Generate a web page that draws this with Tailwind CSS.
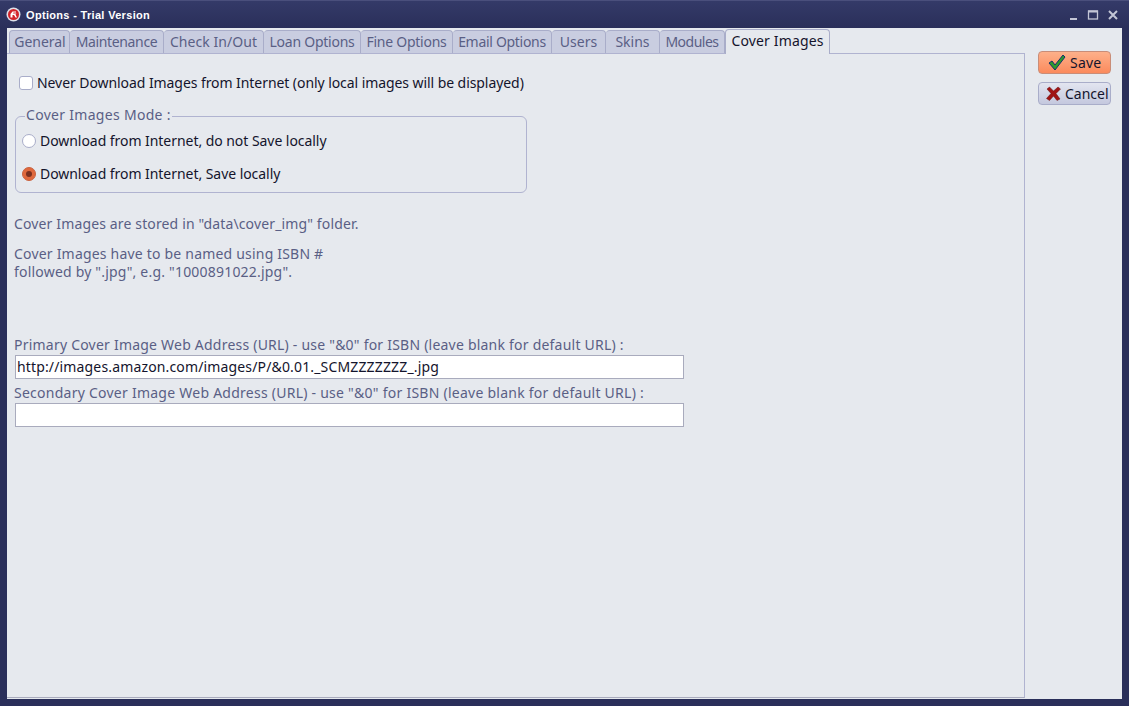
<!DOCTYPE html>
<html lang="en">
<head>
<meta charset="UTF-8" />
<title>Options - Trial Version</title>
<script src="https://cdn.jsdelivr.net/npm/@tailwindcss/browser@4"></script>
</head>
<body class="w-[1129px] h-[706px] overflow-hidden bg-[#2a2f5a] font-['Noto_Sans','DejaVu_Sans',sans-serif] text-[14px] leading-[18px]">

  <!-- title bar -->
  <div class="h-[28px] flex items-center pl-[6px] pr-[9px] bg-gradient-to-b from-[#343a68] to-[#2a2f5a] border-t border-[#4a4f7c]">
    <svg width="15" height="15" viewBox="0 0 15 15" class="shrink-0">
      <circle cx="7.5" cy="7.5" r="7" fill="#dfe1ea"/>
      <circle cx="7.5" cy="7.5" r="5.5" fill="#d3232a"/>
      <path d="M10 4.5 H6.5 L4.5 7 V10.5 H6.5 V8 H8 L9.5 10.5 H11 L9.5 7.5 L10.5 6.5 H7 L7.5 5.5 H10 Z" fill="#fff"/>
    </svg>
    <span class="ml-[5px] text-[11px] font-bold text-white font-['Liberation_Sans',sans-serif] tracking-[0.32px]">Options - Trial Version</span>
    <div class="ml-auto flex items-center gap-[8px] pr-[1px]">
      <svg width="10" height="12" viewBox="0 0 10 12"><rect x="1" y="9" width="7" height="2" fill="#c3c6d6"/></svg>
      <svg width="12" height="12" viewBox="0 0 12 12" fill="none"><rect x="1.5" y="2" width="9" height="8" stroke="#c3c6d6" stroke-width="1.3"/><rect x="1" y="1.5" width="10" height="2" fill="#c3c6d6"/></svg>
      <svg width="12" height="12" viewBox="0 0 12 12" fill="none"><path d="M2 2 L10 10 M10 2 L2 10" stroke="#c3c6d6" stroke-width="2"/></svg>
    </div>
  </div>

  <!-- client area -->
  <div class="mx-[7px] h-[671px] bg-[#e6e9ee] flex">
    <div class="w-[1018px] flex flex-col">
      <div class="h-[25px] pt-[2px] pl-[2px] flex items-stretch text-[#5a5f85] text-center">
        <div class="w-[61px] bg-[#c9cde0] border border-b-0 border-[#a9adc9] rounded-t-[4px] pt-[2px] pl-[1px] tracking-[-0.05px]">General</div>
        <div class="w-[94px] bg-[#c9cde0] border border-l-0 border-b-0 border-[#a9adc9] rounded-t-[4px] pt-[2px] tracking-[-0.35px]">Maintenance</div>
        <div class="w-[100px] bg-[#c9cde0] border border-l-0 border-b-0 border-[#a9adc9] rounded-t-[4px] pt-[2px] tracking-[0.05px]">Check In/Out</div>
        <div class="w-[97px] bg-[#c9cde0] border border-l-0 border-b-0 border-[#a9adc9] rounded-t-[4px] pt-[2px] tracking-[-0.25px]">Loan Options</div>
        <div class="w-[92px] bg-[#c9cde0] border border-l-0 border-b-0 border-[#a9adc9] rounded-t-[4px] pt-[2px] tracking-[-0.25px]">Fine Options</div>
        <div class="w-[99px] bg-[#c9cde0] border border-l-0 border-b-0 border-[#a9adc9] rounded-t-[4px] pt-[2px] tracking-[-0.3px]">Email Options</div>
        <div class="w-[54px] bg-[#c9cde0] border border-l-0 border-b-0 border-[#a9adc9] rounded-t-[4px] pt-[2px]">Users</div>
        <div class="w-[54px] bg-[#c9cde0] border border-l-0 border-b-0 border-[#a9adc9] rounded-t-[4px] pt-[2px]">Skins</div>
        <div class="w-[65px] bg-[#c9cde0] border border-l-0 border-b-0 border-[#a9adc9] rounded-t-[4px] pt-[2px] tracking-[-0.5px]">Modules</div>
        <div class="w-[105px] h-[25px] -mt-[1px] bg-[#e6e9ee] border border-b-0 border-[#a9adc9] rounded-t-[4px] pt-[2px] text-[#14142c] relative z-10 tracking-[0.15px]">Cover Images</div>
      </div>

      <!-- panel -->
      <div class="h-[645px] border border-l-0 border-[#b0b3d0] border-b-[#a9abbd] pl-[7px] flex flex-col text-[#5a5f85]">
        <label class="mt-[20px] ml-[5px] flex items-center h-[18px] text-[#14142c]">
          <span class="w-[14px] h-[14px] bg-white border border-[#a9adc9] rounded-[3px]"></span>
          <span class="ml-[4px] tracking-[-0.07px]">Never Download Images from Internet (only local images will be displayed)</span>
        </label>

        <fieldset class="mt-[14px] ml-[1px] w-[512px] h-[87px] border border-[#b0b3d0] rounded-[6px] pl-[6px]">
          <legend class="ml-[3px] px-[1px] pb-[2px] leading-[18px] tracking-[0.3px]">Cover Images Mode :</legend>
          <div class="mt-[6px] flex items-center h-[18px] text-[#14142c]">
            <span class="w-[14px] h-[14px] bg-white border border-[#a9adc9] rounded-full"></span>
            <span class="ml-[4px] tracking-[-0.05px]">Download from Internet, do not Save locally</span>
          </div>
          <div class="mt-[15px] flex items-center h-[18px] text-[#14142c]">
            <span class="w-[14px] h-[14px] bg-[#e0683c] border border-[#c9623f] rounded-full flex items-center justify-center"><span class="w-[6px] h-[6px] rounded-full bg-[#7a3020]"></span></span>
            <span class="ml-[4px] tracking-[-0.05px]">Download from Internet, Save locally</span>
          </div>
        </fieldset>

        <p class="mt-[22px] tracking-[0.14px]">Cover Images are stored in "data\cover_img" folder.</p>
        <p class="mt-[12px] tracking-[0.2px]">Cover Images have to be named using ISBN #<br />followed by ".jpg", e.g. "1000891022.jpg".</p>

        <p class="mt-[55px] tracking-[0.22px]">Primary Cover Image Web Address (URL) - use "&amp;0" for ISBN (leave blank for default URL) :</p>
        <div class="mt-[1px] ml-[1px] w-[669px] h-[24px] bg-white border border-[#a9abbd] pl-[1px] text-[#14142c] leading-[22px] tracking-[0.15px]">http://images.amazon.com/images/P/&amp;0.01._SCMZZZZZZZ_.jpg</div>
        <p class="mt-[5px] tracking-[0.25px]">Secondary Cover Image Web Address (URL) - use "&amp;0" for ISBN (leave blank for default URL) :</p>
        <div class="mt-[1px] ml-[1px] w-[669px] h-[24px] bg-white border border-[#a9abbd]"></div>
      </div>
    </div>

    <!-- buttons -->
    <div class="flex-1 pt-[23px] pl-[13px] flex flex-col gap-[8px] text-[#14142c]">
      <div class="w-[73px] h-[23px] rounded-[4px] border border-[#c98d78] bg-gradient-to-b from-[#fdb08a] to-[#fb8a5c] flex items-center pl-[9px] gap-[4px]">
        <svg width="18" height="17" viewBox="0 0 18 17"><path d="M1 9 L4 7 L7 11 L15 1 L17 3 L7 16 Z" fill="#2c9a2c" stroke="#14306c" stroke-width="1"/></svg>
        <span class="tracking-[0.2px]">Save</span>
      </div>
      <div class="w-[73px] h-[23px] rounded-[4px] border border-[#a9adc9] bg-gradient-to-b from-[#e3e5f0] to-[#c4c8de] flex items-center pl-[7px] gap-[4px]">
        <svg width="15" height="15" viewBox="0 0 15 15"><path d="M1 3 L3.5 1 L7.5 5 L12 1 L14.5 3 L10 7.5 L14 13 L11 14.5 L7.5 10 L3.5 14.5 L0.5 12.5 L5 7.5 Z" fill="#a01414" stroke="#6a1010" stroke-width="0.5"/></svg>
        <span>Cancel</span>
      </div>
    </div>
  </div>

</body>
</html>
